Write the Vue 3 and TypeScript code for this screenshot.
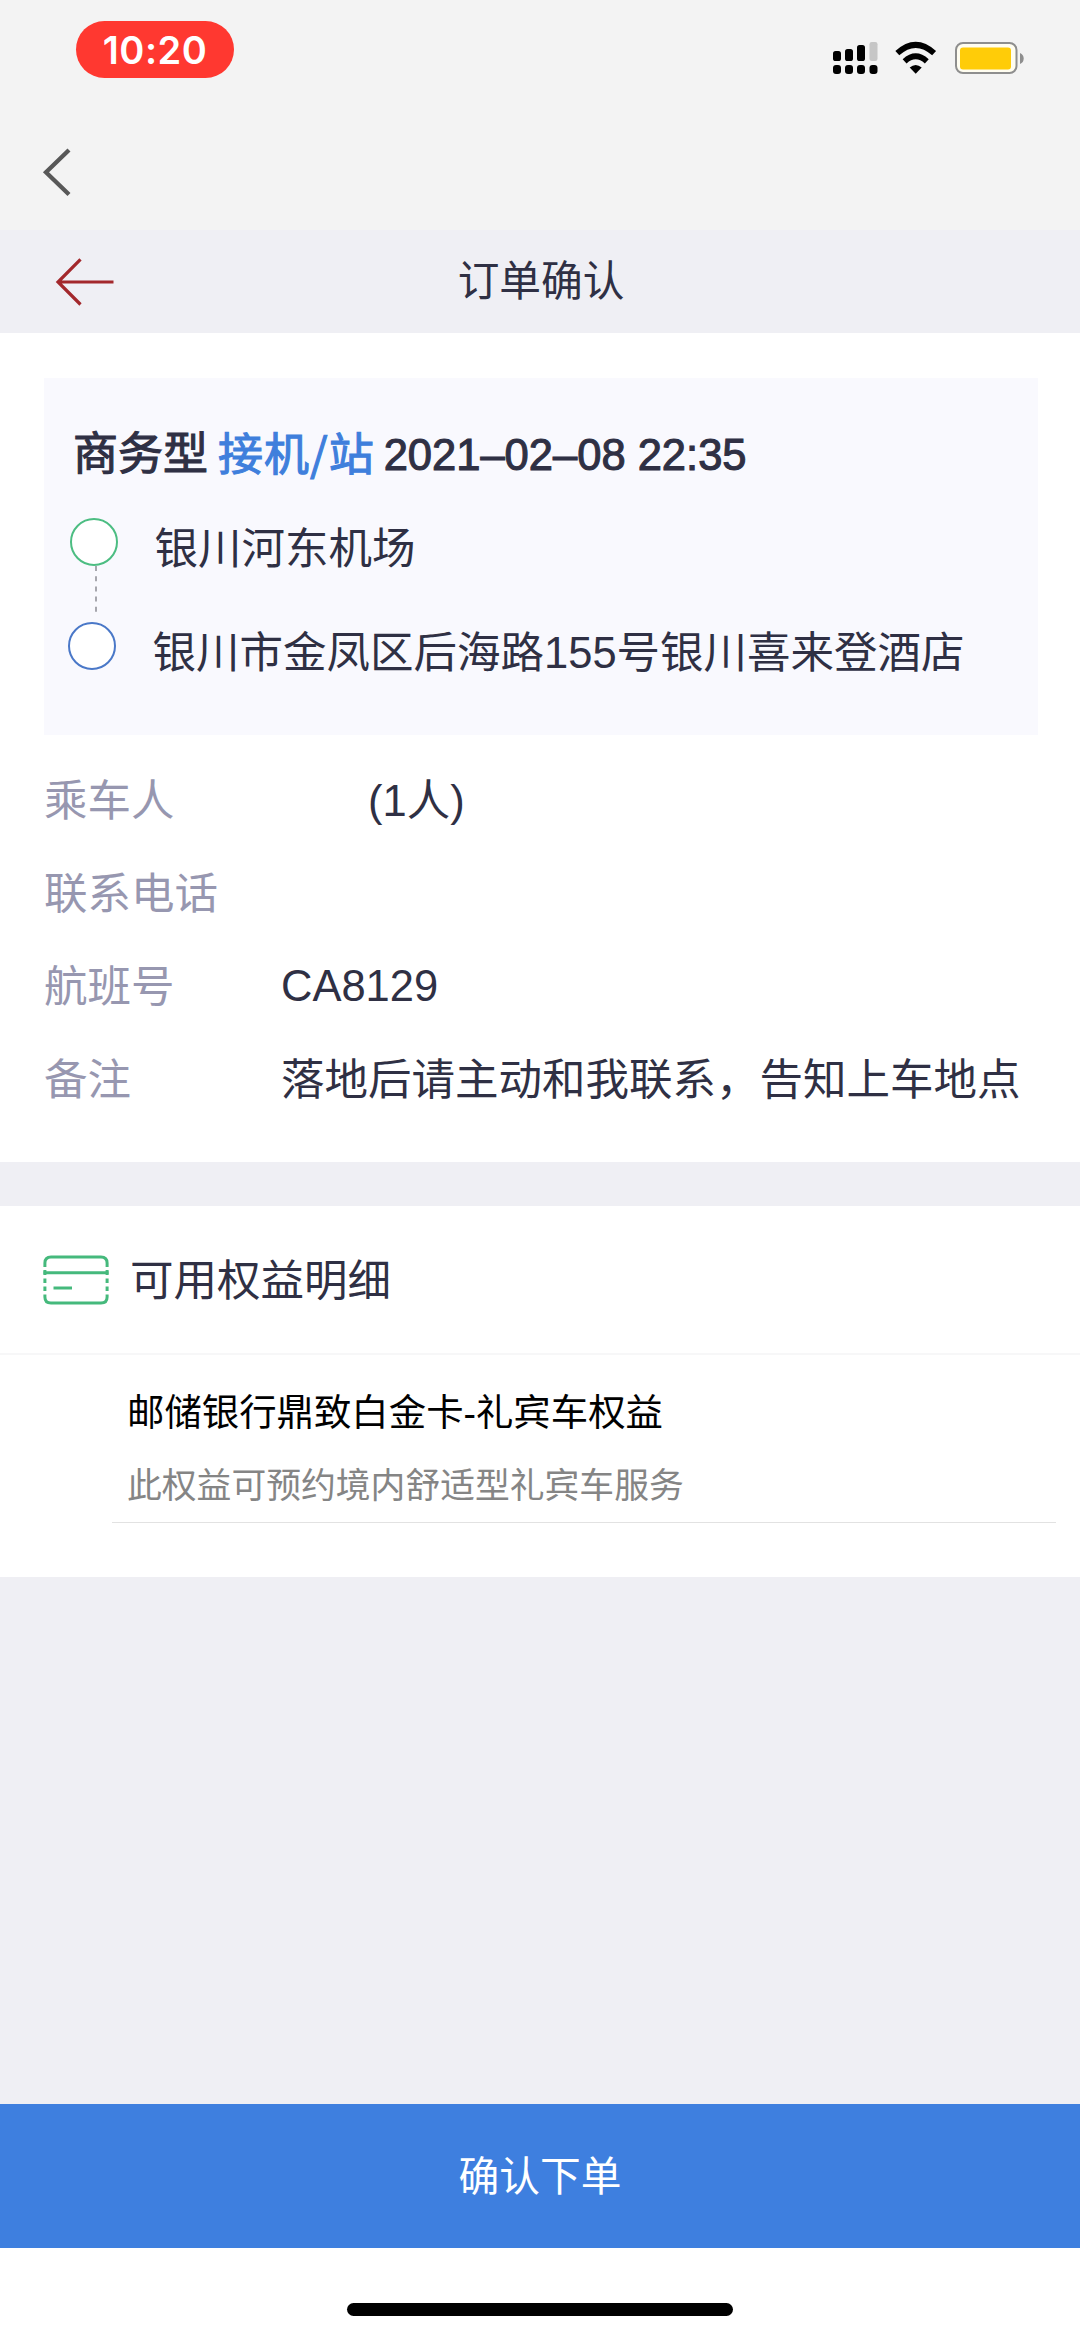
<script setup lang="ts">
interface Row {
  label: string
  value: string
  kind?: string
}

const trip = {
  car: '商务型',
  service: '接机/站',
  time: '2021–02–08 22:35',
  from: '银川河东机场',
  to: '银川市金凤区后海路155号银川喜来登酒店',
}

const rows: Row[] = [
  { label: '乘车人', value: '(1人)', kind: 'offset' },
  { label: '联系电话', value: '' },
  { label: '航班号', value: 'CA8129', kind: 'flight' },
  { label: '备注', value: '落地后请主动和我联系，告知上车地点' },
]
</script>

<template>
  <div class="page">
    <div class="status">
      <span class="clock">10:20</span>
      <div class="indicators">
        <svg class="signal" width="46" height="34" viewBox="0 0 46 34">
          <rect x="0" y="10" width="8" height="10" rx="2.6" />
          <rect x="12" y="8" width="8" height="12" rx="2.6" />
          <rect x="24" y="4" width="8" height="16" rx="2.6" />
          <rect x="36.500" y="1" width="8" height="19" rx="2.2" fill="#c6c6c6" />
          <rect x="0" y="24" width="8" height="9" rx="3" />
          <rect x="12" y="24" width="8" height="9" rx="3" />
          <rect x="24" y="24" width="8" height="9" rx="3" />
          <rect x="36.500" y="24" width="8" height="9" rx="3" />
        </svg>
        <svg class="wifi" width="42" height="34" viewBox="0 0 42 34">
          <path d="M2.300 12.200Q20.700-4.500 39.100 12.200" fill="none" stroke="#000" stroke-width="5.800" />
          <path d="M9.600 20.300Q20.700 10.300 31.800 20.300" fill="none" stroke="#000" stroke-width="5.800" />
          <path d="M14.700 26.500Q20.700 21.500 26.700 26.500L20.700 32.800Z" />
        </svg>
        <svg class="battery" width="70" height="34" viewBox="0 0 70 34">
          <rect x="1" y="2" width="60.500" height="30" rx="7" fill="#fffdf0" stroke="#8e8e8e" stroke-width="2" />
          <rect x="5" y="6.500" width="51" height="22" rx="3" fill="#ffcc08" />
          <path d="M65 12Q68.700 13.500 68.700 17.500Q68.700 21.500 65 23Z" fill="#8e8e8e" />
        </svg>
      </div>
    </div>

    <div class="appbar">
      <svg width="36" height="52" viewBox="0 0 36 52">
        <path d="M29 4L6 26.300L29 48.500" fill="none" stroke="#585858" stroke-width="4.300" />
      </svg>
    </div>

    <header class="header">
      <svg class="arrow" width="60" height="50" viewBox="0 0 60 50">
        <path d="M25.500 2.300L3 25L25.500 47.500M3 25H58.500" fill="none" stroke="#a3282c" stroke-width="3.200" />
      </svg>
      <h1>订单确认</h1>
    </header>

    <section class="order">
      <div class="trip">
        <div class="headline">
          <span>{{ trip.car }}</span>
          <span class="service">{{ trip.service }}</span>
          <span class="time">{{ trip.time }}</span>
        </div>
        <div class="route">
          <div class="track">
            <i class="dot start"></i>
            <svg class="dash" width="2" height="46" viewBox="0 0 2 46">
              <path d="M1 0V46" stroke="#8a8a92" stroke-width="1.500" stroke-dasharray="5 5.200" />
            </svg>
            <i class="dot end"></i>
          </div>
          <div class="places">
            <span class="place from">{{ trip.from }}</span>
            <span class="place">{{ trip.to }}</span>
          </div>
        </div>
      </div>
      <div class="rows">
        <div v-for="row in rows" :key="row.label" class="row">
          <span class="label">{{ row.label }}</span>
          <span class="value" :class="row.kind">{{ row.value }}</span>
        </div>
      </div>
    </section>

    <section class="benefits">
      <div class="benefits-head">
        <svg width="66" height="50" viewBox="0 0 66 50" fill="none" stroke="#45b97c" stroke-width="3">
          <path d="M1.900 12V8Q1.900 1.900 8 1.900H58Q64.100 1.900 64.100 8V12" />
          <path d="M0.500 17.800H65.500" />
          <path d="M1.900 15V20M64.100 15V20M1.900 23.500V28M64.100 23.500V28M1.900 31.500V36M64.100 31.500V36" />
          <path d="M1.900 39.500V42Q1.900 48.100 8 48.100H58Q64.100 48.100 64.100 42V39.500" />
          <path d="M10.500 33H29" />
        </svg>
        <h2>可用权益明细</h2>
      </div>
      <div class="benefit">
        <div class="name">邮储银行鼎致白金卡-礼宾车权益</div>
        <div class="desc">此权益可预约境内舒适型礼宾车服务</div>
      </div>
    </section>

    <footer class="footer">
      <button class="submit" type="button">确认下单</button>
      <div class="home"><i></i></div>
    </footer>
  </div>
</template>

<style>
body {
  margin: 0;
}
</style>

<style scoped>
.page {
  display: flex;
  flex-direction: column;
  width: 1080px;
  height: 2337px;
  overflow: hidden;
  background: #efeff4;
  color: #2f3044;
  font-family: 'Liberation Sans', 'Noto Sans CJK SC', sans-serif;
  font-size: 43.5px;
}
svg {
  display: block;
  flex: none;
}
.status {
  display: flex;
  justify-content: space-between;
  box-sizing: border-box;
  height: 120px;
  padding: 21px 55px 0 76px;
  background: #f3f3f3;
}
.clock {
  width: 158px;
  height: 57px;
  border-radius: 29px;
  background: #ff3830;
  color: #fff;
  font: 600 38px/58px Inter, sans-serif;
  letter-spacing: 0.5px;
  text-align: center;
}
.indicators {
  display: flex;
  padding-top: 20px;
}
.wifi {
  margin-left: 16px;
}
.battery {
  margin-left: 18px;
}
.appbar {
  height: 84px;
  padding: 26px 40px 0;
  background: #f3f3f3;
}
.header {
  display: grid;
  grid-template-columns: 125px 1fr 125px;
  align-items: center;
  height: 103px;
}
.arrow {
  margin-left: 55px;
}
h1 {
  margin: 0;
  padding: 1px 0 0 2px;
  font-size: 41.7px;
  font-weight: 400;
  line-height: 60px;
  text-align: center;
}
.order {
  box-sizing: border-box;
  height: 829px;
  padding: 45px 42px 0 44px;
  background: #fff;
}
.trip {
  box-sizing: border-box;
  height: 357px;
  padding: 47px 0 0 24px;
  background: #f9f9fe;
}
.headline {
  display: flex;
  height: 60px;
  padding-left: 5px;
  font-size: 45px;
  line-height: 60px;
  white-space: nowrap;
  -webkit-text-stroke: 1.1px currentColor;
}
.service {
  margin-left: 10px;
  color: #3f7fdc;
  font-family: 'Noto Sans CJK SC', sans-serif;
  letter-spacing: 1px;
  line-height: 54px;
}
.time {
  margin-left: 9px;
  font-size: 43.5px;
}
.route {
  display: flex;
  padding-top: 33px;
}
.track {
  width: 84.5px;
}
.dot {
  display: block;
  box-sizing: border-box;
  width: 48px;
  height: 48px;
  border: 2.5px solid #4a78c8;
  border-radius: 50%;
  background: #fff;
}
.start {
  margin-left: 2px;
  border-color: #4cbd82;
}
.dash {
  margin: 0 0 10px 27px;
}
.places {
  display: flex;
  flex-direction: column;
}
.place {
  height: 104px;
  line-height: 63px;
  white-space: nowrap;
}
.from {
  padding-left: 2px;
}
.rows {
  padding-top: 20px;
}
.row {
  display: flex;
  height: 93px;
  line-height: 93px;
  white-space: nowrap;
}
.label {
  width: 237px;
  color: #9797b0;
}
.offset {
  padding-left: 87px;
}
.flight {
  line-height: 90px;
}
.benefits {
  height: 371px;
  margin-top: 44px;
  background: #fff;
}
.benefits-head {
  display: flex;
  align-items: center;
  gap: 21px;
  box-sizing: border-box;
  height: 149px;
  padding-left: 43px;
  border-bottom: 2px solid #f7f7f8;
}
h2 {
  margin: 0;
  padding-top: 2px;
  font-size: 43.5px;
  font-weight: 400;
  line-height: 64px;
}
.benefit {
  box-sizing: border-box;
  height: 168px;
  margin: 0 24px 0 112px;
  padding: 28px 0 0 15px;
  border-bottom: 1px solid #e2e2e2;
}
.name {
  color: #000;
  font-size: 37.4px;
  line-height: 60px;
}
.desc {
  padding-top: 13px;
  color: #858585;
  font-size: 34.8px;
  line-height: 60px;
}
.footer {
  margin-top: auto;
  background: #fff;
}
.submit {
  display: block;
  width: 100%;
  height: 144px;
  padding: 2px 0 0;
  border: 0;
  background: #3e7fdf;
  color: #fff;
  font-family: inherit;
  font-size: 40.7px;
  line-height: 142px;
}
.home {
  display: flex;
  justify-content: center;
  height: 89px;
}
.home i {
  width: 386px;
  height: 13px;
  margin-top: 55px;
  border-radius: 7px;
  background: #000;
}
</style>
